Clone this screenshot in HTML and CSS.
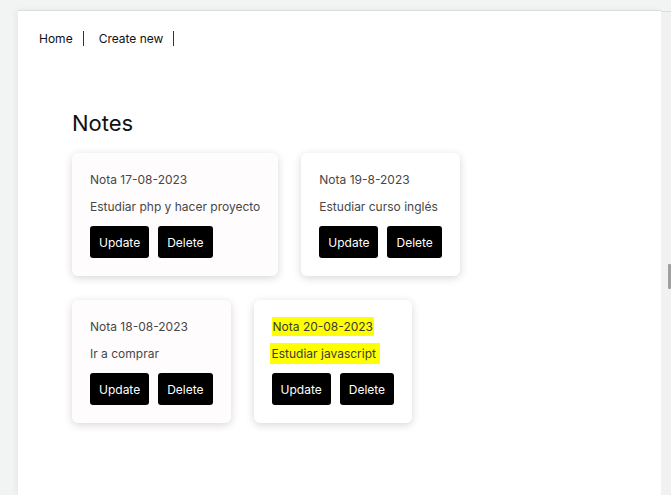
FILE: index.html
```html
<!DOCTYPE html>
<html lang="es">
<head>
<meta charset="utf-8">
<title>Notes</title>
<link rel="stylesheet" href="styles.css">
</head>
<body>
<div class="window">
  <div class="panel">
    <nav class="nav">
      <a class="nav-link" href="#">Home</a>
      <a class="nav-link" href="#">Create new</a>
    </nav>
    <main class="content">
      <h1 class="title">Notes</h1>
      <div class="cards">
        <div class="card tinted">
          <p class="card-title">Nota 17-08-2023</p>
          <p class="card-body">Estudiar php y hacer proyecto</p>
          <div class="actions"><button class="btn">Update</button><button class="btn">Delete</button></div>
        </div>
        <div class="card">
          <p class="card-title">Nota 19-8-2023</p>
          <p class="card-body">Estudiar curso inglés</p>
          <div class="actions"><button class="btn">Update</button><button class="btn">Delete</button></div>
        </div>
        <div class="card tinted">
          <p class="card-title">Nota 18-08-2023</p>
          <p class="card-body">Ir a comprar</p>
          <div class="actions"><button class="btn">Update</button><button class="btn">Delete</button></div>
        </div>
        <div class="card">
          <p class="card-title"><span class="mark">Nota 20-08-2023</span></p>
          <p class="card-body"><span class="mark mark-wide">Estudiar javascript</span></p>
          <div class="actions"><button class="btn">Update</button><button class="btn">Delete</button></div>
        </div>
      </div>
    </main>
  </div>
  <div class="scrollbar"><div class="thumb"></div></div>
</div>
</body>
</html>
```
FILE: styles.css
```css
html, body {
  margin: 0;
  padding: 0;
  height: 100%;
}
body {
  background: #f2f3f3;
  font-family: Inter, "Noto Sans", sans-serif;
  overflow: hidden;
}
.window {
  display: flex;
  height: 100%;
  padding: 10px 0 0 18px;
  box-sizing: border-box;
}
.panel {
  flex: 1;
  background: #fff;
  border-top: 1px solid #dcdcdc;
  box-shadow: -2px 0 6px rgba(0, 0, 0, 0.05);
}
.scrollbar {
  width: 10px;
  background: #f1f1f1;
  margin-top: 1px;
  border-top: 1px solid #dcdcdc;
}
.thumb {
  width: 3px;
  height: 25px;
  margin: 252px 0 0 7px;
  background: #a0a0a0;
  border-radius: 1px;
}
.nav {
  display: flex;
  padding: 20px 0 0 21px;
}
.nav-link {
  color: #111;
  text-decoration: none;
  font-size: 12px;
  line-height: 15px;
  padding-right: 10px;
  margin-right: 15px;
  border-right: 1px solid #333;
}
.content {
  padding: 62px 0 0 54px;
}
.title {
  margin: 0 0 15px;
  font-size: 22px;
  font-weight: 400;
  color: #111;
  line-height: 30px;
}
.cards {
  display: flex;
  flex-wrap: wrap;
  gap: 24px 23px;
  width: 430px;
}
.card {
  background: #fff;
  border-radius: 6px;
  padding: 18px;
  box-shadow: 0 2px 9px rgba(0, 0, 0, 0.16);
}
.card.tinted {
  background: #fffcfd;
}
.card-title, .card-body {
  margin: 0;
  font-size: 12px;
  line-height: 18px;
  color: #474747;
}
.card-title {
  margin-bottom: 9px;
}
.card-body {
  margin-bottom: 10px;
}
.mark {
  background: #ffff00;
  color: #3a3a3a;
  padding: 2px 1px;
}
.mark-wide {
  padding: 3px 4px 3px 2px;
  margin-left: -2px;
}
.actions {
  display: flex;
  gap: 9px;
}
.btn {
  background: #000;
  color: #fff;
  border: 0;
  border-radius: 3px;
  height: 32px;
  padding: 0 9px;
  font-family: Inter, "Noto Sans", sans-serif;
  font-size: 12px;
}
```
